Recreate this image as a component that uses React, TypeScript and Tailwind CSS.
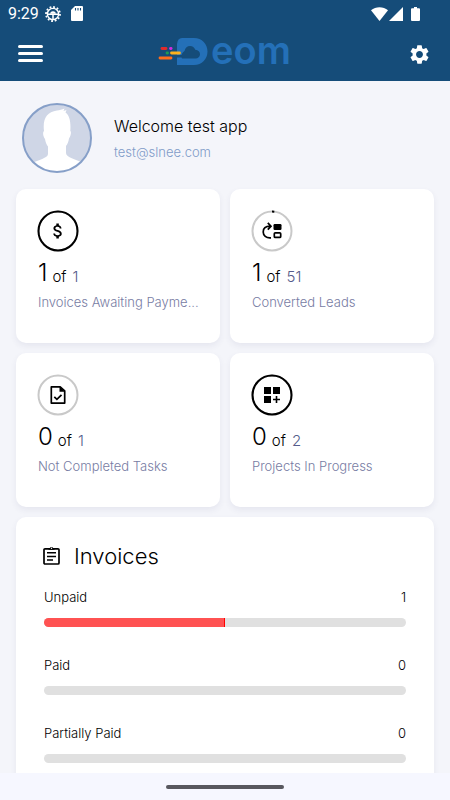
import React from "react";
import { MdSettings, MdAttachMoney } from "react-icons/md";

function StatusBar() {
  return (
    <div className="flex h-[27px] items-center pl-2 pr-[30px] text-white">
      <span className="font-['Roboto',sans-serif] text-[16px] leading-5">9:29</span>
      <svg className="ml-[6px] h-4 w-4" viewBox="0 0 16 16" fill="none" stroke="currentColor">
        <circle cx="8" cy="8" r="7" strokeWidth="1.8" strokeDasharray="1.8 1.86" />
        <circle cx="8" cy="8" r="5.6" strokeWidth="1.4" />
        <path d="M2.500 8.200h11M8 8v5.500" strokeWidth="1.500" />
        <path d="M5.200 7.800a2.800 2.600 0 0 1 5.600 0z" fill="currentColor" stroke="none" />
      </svg>
      <svg className="ml-[10px] h-[15px] w-3" viewBox="0 0 12 15">
        <path d="M4 0h7a1 1 0 0 1 1 1v13a1 1 0 0 1-1 1H1a1 1 0 0 1-1-1V4z" fill="currentColor" />
        <path d="M4.500 2v2.600M7 2v2.600M9.500 2v2.600" stroke="#154c79" strokeWidth="1.1" />
      </svg>
      <div className="ml-auto flex items-center">
        <svg className="h-[14px] w-[17px]" viewBox="0 0 17 14" fill="currentColor">
          <path d="M0 3.300C4.700-.8 12.300-.8 17 3.300L8.500 14z" />
        </svg>
        <svg className="ml-px h-[14px] w-[14px]" viewBox="0 0 14 14" fill="currentColor">
          <path d="M14 0v14H0z" />
        </svg>
        <svg className="ml-2 h-[14px] w-[9px]" viewBox="0 0 9 14" fill="currentColor">
          <path d="M3 0h3v1.300h2a1 1 0 0 1 1 1V13a1 1 0 0 1-1 1H1a1 1 0 0 1-1-1V2.300a1 1 0 0 1 1-1h2z" />
        </svg>
      </div>
    </div>
  );
}

function Logo() {
  return (
    <div className="flex h-9 items-start pr-1 text-[#2470b8]">
      <svg className="h-9 w-[55px]" viewBox="0 0 55 36" fill="none">
        <path
          d="M26 2h12c8 0 13.500 6 13.500 13.500S46 29 38 29H21v-7.500h6V19h-6V8c.5-4 2-6 5-6z"
          fill="currentColor"
        />
        <path
          d="M26 22.500c-1.200-3 0-6 2.500-7.500.8-3.300 2.800-5 5.500-5 2.600 0 4.400 1.300 5.300 3.800 3 .2 4.700 2 4.700 4.400s-2 4.300-4.500 4.300z"
          fill="#154c79"
        />
        <g strokeWidth="2.800" strokeLinecap="round">
          <path d="M6 12.500h4" stroke="#e02b2b" />
          <path d="M14.500 12.500h.6" stroke="#d12be0" />
          <path d="M11 17h.6" stroke="#1e9a50" />
          <path d="M15.500 17h8" stroke="#fbb11d" />
          <path d="M4 22h11" stroke="#ff6d1b" />
        </g>
      </svg>
      <span className="font-['Inter',sans-serif] text-[38px] font-semibold leading-7">eom</span>
    </div>
  );
}

function AppBar() {
  return (
    <div className="flex h-[54px] items-center justify-between pl-[18px] pr-[19px] text-white">
      <button aria-label="Menu" className="flex w-[25px] flex-col gap-1 pb-0.5">
        <span className="h-[3px] w-full rounded-full bg-white" />
        <span className="h-[3px] w-full rounded-full bg-white" />
        <span className="h-[3px] w-full rounded-full bg-white" />
      </button>
      <Logo />
      <button aria-label="Settings">
        <MdSettings size={23} />
      </button>
    </div>
  );
}

function Avatar() {
  return (
    <svg className="h-[70px] w-[70px] shrink-0" viewBox="0 0 70 70">
      <clipPath id="face">
        <circle cx="35" cy="35" r="34" />
      </clipPath>
      <g clipPath="url(#face)">
        <rect width="70" height="70" fill="#cfd6e6" />
        <path
          d="M22 28c-1.500-12 2.500-19 13-20.500 2.500-.5 5-.8 7.500-2l-1 2.500 3-1-1 2.500c4 3 5.500 9 4.800 18.500 1.200.5.700 4.500-1.300 7.500-.5 3-1.500 5.500-3 7.500v7c0 4 9 6.500 15 9V70H10V60c6-3 16-5 16-9v-7.500c-1.500-2-2.500-4.500-3-7.500-2-2.500-2.500-7-1-8z"
          fill="#fff"
        />
      </g>
      <circle cx="35" cy="35" r="34" fill="none" stroke="#869fc8" strokeWidth="2" />
    </svg>
  );
}

type StatProps = {
  value: number;
  total: number;
  label: string;
  progress: number;
  icon: React.ReactNode;
};

function StatCard({ value, total, label, progress, icon }: StatProps) {
  const length = 2 * Math.PI * 19.5;
  return (
    <section className="rounded-[10px] bg-white px-[21px] pb-[31px] pt-[21px] shadow-[0_3px_6px_rgba(60,70,110,0.08)]">
      <div className="grid h-[42px] w-[42px] place-items-center">
        <svg className="col-start-1 row-start-1 h-[42px] w-[42px] -rotate-90" viewBox="0 0 42 42" fill="none" strokeWidth="2">
          <circle cx="21" cy="21" r="19.500" stroke="#c9c9c9" />
          {progress > 0 && (
            <circle cx="21" cy="21" r="19.500" stroke="#000" strokeDasharray={`${length * progress} ${length}`} />
          )}
        </svg>
        <span className="col-start-1 row-start-1">{icon}</span>
      </div>
      <p className="mt-[7px] flex items-end pl-px">
        <span className="text-[24px] font-light leading-7">{value}</span>
        <span className="ml-[5px] text-[15px] font-light leading-5">of</span>
        <span className="ml-[6px] text-[15px] font-light leading-5 text-[#555c8c]">{total}</span>
      </p>
      <p className="mt-[5px] truncate pl-px text-[13px] font-light leading-5 text-[#777ca3]">{label}</p>
    </section>
  );
}

const convertIcon = (
  <svg className="h-5 w-5" viewBox="0 0 20 20" fill="none" stroke="#000" strokeWidth="1.700">
    <path d="M9 16.800C4 17.300 1.200 14.300 1.200 11c0-3.500 2.500-5.800 7-5.800M5.800 1.800 9 5.200 5.800 8.600" />
    <rect x="11.500" y="3" width="8" height="6" rx="1.200" fill="#000" stroke="none" />
    <rect x="12.300" y="11.800" width="6.400" height="4.600" rx="1" />
  </svg>
);

const taskIcon = (
  <svg className="h-5 w-5" viewBox="0 0 20 20" fill="none" stroke="#000" strokeWidth="1.700">
    <path d="M3.300 1.900h8.900l4.500 4v12.200H3.300z" strokeLinejoin="round" />
    <path d="M11.500 1.500v5.200H17z" fill="#000" stroke="none" />
    <path d="m6.300 11.800 2.600 2.600 4.600-4.600" />
  </svg>
);

const projectIcon = (
  <svg className="h-5 w-5" viewBox="0 0 20 20" fill="#000">
    <path d="M2 2h7v7H2zM11 2h7v7h-7zM2 11h7v7H2zM13.700 11h1.600v2.700H18v1.600h-2.700V18h-1.600v-2.700H11v-1.600h2.700z" />
  </svg>
);

const stats: StatProps[] = [
  { value: 1, total: 1, label: "Invoices Awaiting Payme...", progress: 1, icon: <MdAttachMoney size={20} /> },
  { value: 1, total: 51, label: "Converted Leads", progress: 1 / 51, icon: convertIcon },
  { value: 0, total: 1, label: "Not Completed Tasks", progress: 0, icon: taskIcon },
  { value: 0, total: 2, label: "Projects In Progress", progress: 1, icon: projectIcon },
];

const invoices = [
  { label: "Unpaid", count: 1, share: 50 },
  { label: "Paid", count: 0, share: 0 },
  { label: "Partially Paid", count: 0, share: 0 },
];

function Invoices() {
  return (
    <section className="mt-[10px] rounded-[10px] bg-white px-7 pb-7 pt-6 shadow-[0_3px_6px_rgba(60,70,110,0.08)]">
      <h2 className="flex items-center text-[22px] font-light leading-[30px]">
        <svg className="-ml-0.5 mr-3 h-5 w-5" viewBox="0 0 20 20" fill="none" stroke="#000" strokeWidth="1.700">
          <rect x="2" y="2.800" width="15" height="15.200" rx="1" />
          <path d="M5 6.800h9M5 10.400h9M5 14h6" strokeWidth="1.500" />
          <path d="M6.500 3.800V2h1.300a2 2 0 0 1 3.400 0h1.300v1.800z" fill="#000" stroke="none" />
          <circle cx="9.500" cy="2.300" r=".7" fill="#fff" stroke="none" />
        </svg>
        Invoices
      </h2>
      <ul className="mt-4 flex flex-col gap-7">
        {invoices.map((row) => (
          <li key={row.label}>
            <div className="flex justify-between text-[13px] font-light leading-5">
              <span>{row.label}</span>
              <span>{row.count}</span>
            </div>
            <div className="mt-[11px] h-[9px] overflow-hidden rounded-full bg-[#e0e0e0]">
              {row.share > 0 && (
                <div className="h-full border-r border-[#f00] bg-[#ff5252]" style={{ width: `${row.share}%` }} />
              )}
            </div>
          </li>
        ))}
      </ul>
    </section>
  );
}

export default function App() {
  return (
    <div className="flex h-screen flex-col bg-[#f4f5fa] font-['Inter',sans-serif] text-black">
      <header className="shrink-0 bg-[#154c79]">
        <StatusBar />
        <AppBar />
      </header>
      <main className="min-h-0 flex-1 overflow-hidden px-4">
        <div className="flex items-center gap-[22px] pb-4 pl-[6px] pt-[22px]">
          <Avatar />
          <div>
            <h1 className="text-[16px] font-light leading-6">Welcome test app</h1>
            <p className="mt-1 text-[13px] font-light leading-5 text-[#7f9bc8]">test@slnee.com</p>
          </div>
        </div>
        <div className="grid grid-cols-2 gap-[10px]">
          {stats.map((s) => (
            <StatCard key={s.label} {...s} />
          ))}
        </div>
        <Invoices />
      </main>
      <footer className="flex h-[27px] shrink-0 items-center justify-center bg-[#f6f7ff]">
        <div className="h-1 w-[118px] rounded-full bg-[#58585f]" />
      </footer>
    </div>
  );
}
